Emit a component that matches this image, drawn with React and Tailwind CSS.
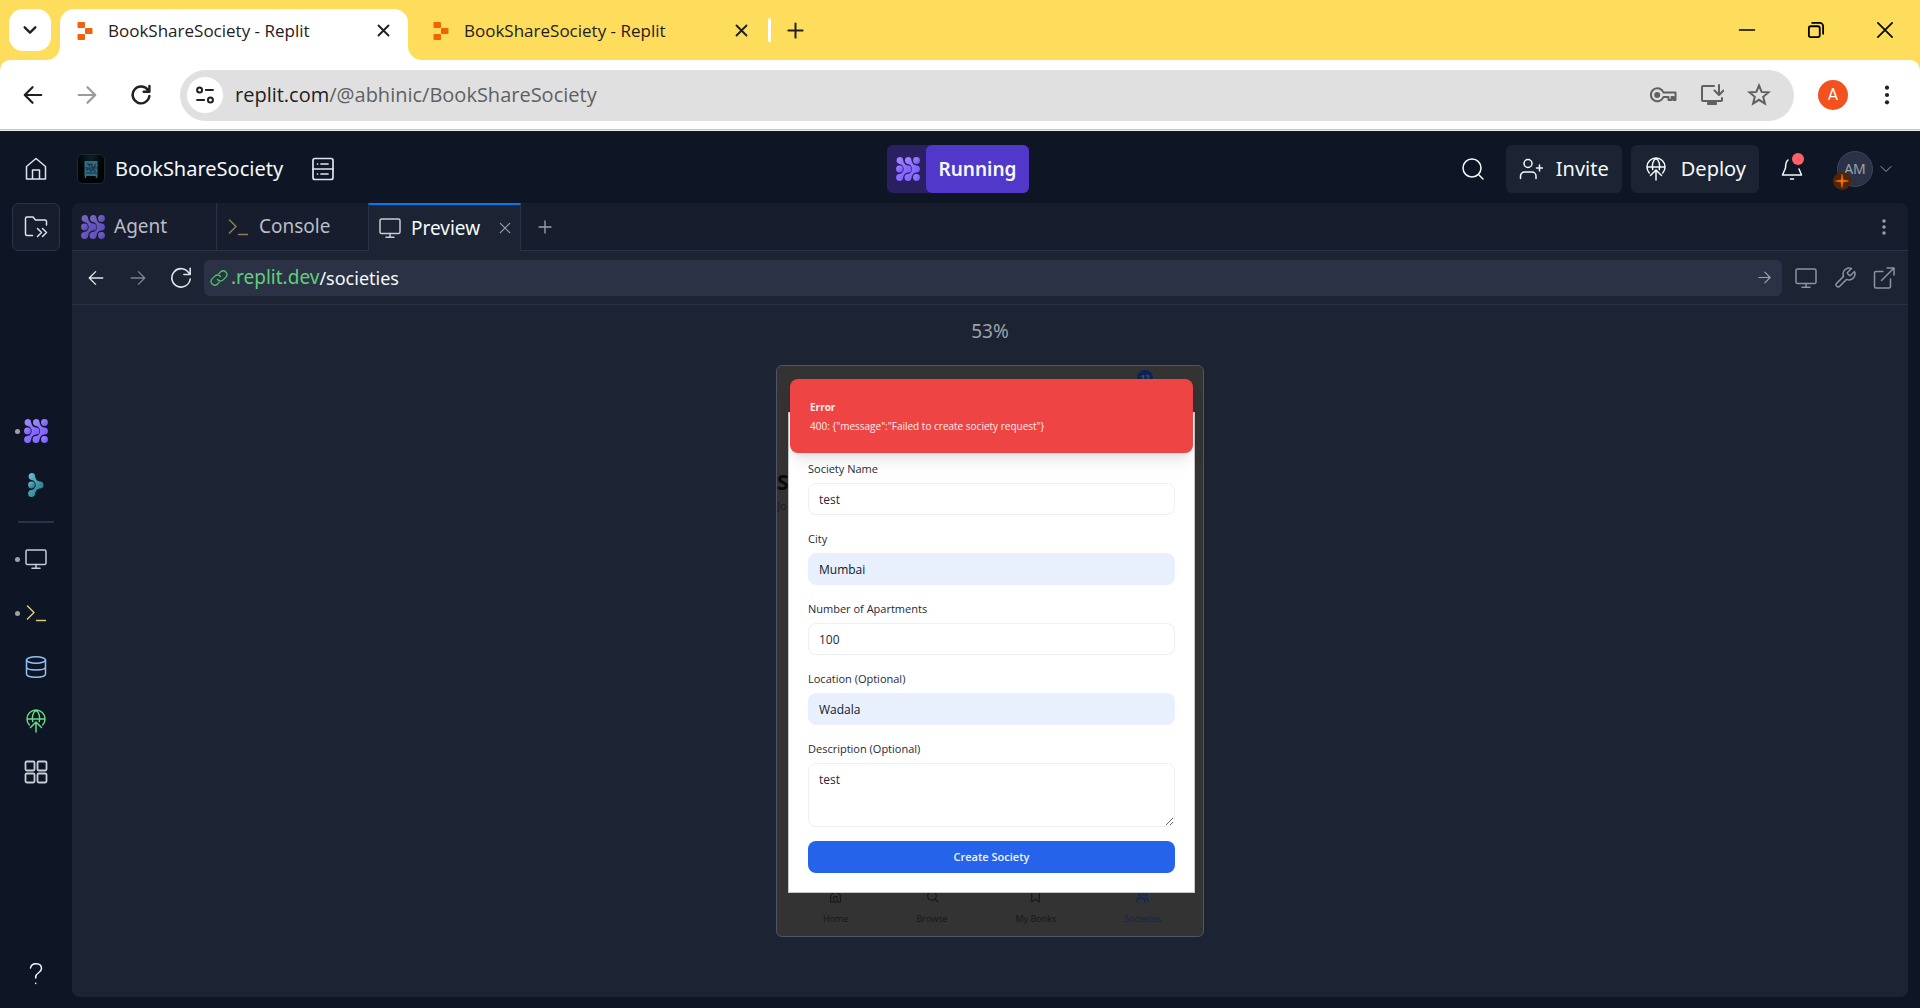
import React from "react";

const ui = "font-['Noto_Sans',sans-serif]";

function Svg({ className, children, box = "0 0 24 24", width = 1.5 }) {
  return (
    <svg viewBox={box} className={className} fill="none" stroke="currentColor" strokeWidth={width} strokeLinecap="round" strokeLinejoin="round" aria-hidden="true">
      {children}
    </svg>
  );
}

const Chevron = ({ x = 0 }) => (
  <path
    transform={`translate(${x} 0)`}
    d="M3.5 0.1A3.4 3.4 0 0 1 7.1 3.2C7.6 6.2 9.2 8.3 12 8.500A3.500 3.500 0 0 1 12 15.500C9.200 15.700 7.600 17.800 7.100 20.800A3.500 3.500 0 1 1 3.500 17C6 16.600 7.700 14.600 7.700 12S6 7.400 3.500 7A3.500 3.500 0 0 1 3.500 0.100Z"
  />
);

function AgentIcon({ className, id }) {
  return (
    <svg viewBox="0 0 24 24" className={className} aria-hidden="true">
      <defs>
        <linearGradient id={id} x1="0" y1="0" x2="1" y2="1">
          <stop offset="0" stopColor="#a18bff" />
          <stop offset="1" stopColor="#7352ff" />
        </linearGradient>
      </defs>
      <g fill={`url(#${id})`}>
        <Chevron />
        <Chevron x={8.4} />
        <circle cx="3.5" cy="12" r="3.4" />
        <circle cx="20.5" cy="3.5" r="3.4" />
        <circle cx="20.5" cy="20.5" r="3.4" />
      </g>
    </svg>
  );
}

function AssistantIcon({ className }) {
  return (
    <svg viewBox="0 0 16 24" className={className} aria-hidden="true">
      <defs>
        <linearGradient id="teal" x1="0" y1="0" x2="1" y2="1">
          <stop offset="0" stopColor="#6cc3d5" />
          <stop offset="1" stopColor="#1f6c7c" />
        </linearGradient>
      </defs>
      <g fill="url(#teal)">
        <Chevron />
        <circle cx="3.5" cy="12" r="3.4" />
      </g>
    </svg>
  );
}

function ReplitLogo({ className }) {
  return (
    <svg viewBox="0 0 16 18" className={className} fill="#f26207" aria-hidden="true">
      <rect x="0.5" y="0" width="7.5" height="6" rx="1" />
      <rect x="8" y="6" width="7.5" height="6" rx="1" />
      <rect x="0.5" y="12" width="7.5" height="6" rx="1" />
    </svg>
  );
}

const Monitor = ({ className }) => (
  <Svg className={className}><rect x="2" y="3" width="20" height="14.5" rx="1.6" /><path d="M12 17.5V21M8 21.3h8" /></Svg>
);
const Prompt = ({ className }) => (
  <Svg className={className}><path d="M3.5 5l6.500 6.500L3.500 18M12.500 19.500h9" /></Svg>
);
const DeployIcon = ({ className }) => (
  <Svg className={className}>
    <path d="M5.300 16A9 9 0 1 1 18.700 16M3.300 10h17.400M8.700 12.500C7.600 8 9 3 12 1.300c3 1.700 4.400 6.700 3.300 11.200M12 23V13.500M6.500 18.500 12 13l5.500 5.500" />
  </Svg>
);
const Arrow = ({ className, width = 1.5, flip }) => (
  <Svg className={className} width={width}>
    {flip ? <path d="M21 12H3.500M11.500 3.500 3 12l8.500 8.500" /> : <path d="M3 12h17.500M12.500 3.500 21 12l-8.500 8.500" />}
  </Svg>
);
const Reload = ({ className, width = 1.5 }) => (
  <Svg className={className} width={width}><path d="M20 7.200A9.200 9.200 0 1 0 21.200 13M21.200 2.200v6.300h-6.300" /></Svg>
);
const Close = ({ className, width = 2 }) => (
  <Svg className={className} width={width}><path d="M4 4l16 16M20 4 4 20" /></Svg>
);
const Plus = ({ className, width = 2 }) => (
  <Svg className={className} width={width}><path d="M12 3v18M3 12h18" /></Svg>
);
const Dots = ({ className }) => (
  <svg viewBox="0 0 24 24" className={className} fill="currentColor" aria-hidden="true">
    <circle cx="12" cy="4" r="2.300" /><circle cx="12" cy="12" r="2.300" /><circle cx="12" cy="20" r="2.300" />
  </svg>
);

function BrowserTab({ active }) {
  return (
    <div className={active ? "relative flex h-[51px] w-[348px] items-center rounded-t-[14px] bg-white px-[17px] pb-2" : "flex h-[51px] w-[360px] items-center pr-[19px] pb-2 pl-[25px]"}>
      {active && (
        <>
          <svg viewBox="0 0 14 14" className="absolute bottom-0 -left-[14px] size-[14px]" aria-hidden="true"><path d="M14 0v14H0A14 14 0 0 0 14 0Z" fill="#fff" /></svg>
          <svg viewBox="0 0 14 14" className="absolute -right-[14px] bottom-0 size-[14px]" aria-hidden="true"><path d="M0 0v14h14A14 14 0 0 1 0 0Z" fill="#fff" /></svg>
        </>
      )}
      <ReplitLogo className="h-[18px] w-4 shrink-0" />
      <span className="ml-[15px] flex-1 text-[17px] whitespace-nowrap text-[#1f2023]">BookShareSociety - Replit</span>
      <button aria-label="Close tab" className="text-[#1f2023]"><Close className="size-[15px]" width={3} /></button>
    </div>
  );
}

function BrowserChrome() {
  return (
    <header className="bg-[#ffdd5c] font-['Open_Sans',sans-serif]">
      <div className="flex h-[60px] items-start pt-[9px] pl-[9px]">
        <button aria-label="Search tabs" className="mr-[9px] flex size-[42px] items-center justify-center rounded-[14px] bg-white text-[#1f2023]">
          <Svg className="size-4" width={3.500}><path d="M4 8l8 8 8-8" /></Svg>
        </button>
        <BrowserTab active />
        <BrowserTab />
        <div className="mt-[9px] h-6 w-[3px] rounded bg-white" />
        <button aria-label="New tab" className="mt-[12px] ml-[15px] text-[#1f2023]"><Plus className="size-[19px]" width={2.500} /></button>
        <div className="mt-[12px] mr-[26px] ml-auto flex items-center gap-[51px] text-black">
          <button aria-label="Minimize"><Svg className="size-[18px]" width={2}><path d="M2 12h20" /></Svg></button>
          <button aria-label="Restore"><Svg className="size-[18px]" width={2.400}><rect x="2.500" y="7" width="14.500" height="14.500" rx="2.500" /><path d="M7 2.500h10a4.500 4.500 0 0 1 4.500 4.500v10" /></Svg></button>
          <button aria-label="Close window"><Svg className="size-[18px]" width={2.200}><path d="M2.500 2.500l19 19M21.500 2.500l-19 19" /></Svg></button>
        </div>
      </div>
      <div className="flex h-[71px] items-center rounded-t-[10px] border-b border-[#eee] bg-white pr-[22px] pl-[22px] shadow-[inset_0_-1px_0_#c4c4c4]">
        <button aria-label="Back" className="text-[#1f2023]"><Arrow flip className="size-[22px]" width={2.400} /></button>
        <button aria-label="Forward" className="ml-8 text-[#9a9a9a]"><Arrow className="size-[22px]" width={2.400} /></button>
        <button aria-label="Reload" className="ml-8 text-[#1f2023]"><Reload className="size-[22px]" width={2.600} /></button>
        <div className="ml-7 flex h-[51px] flex-1 items-center rounded-full bg-[#e0e0e0] px-[7px]">
          <button aria-label="Site information" className="flex size-9 items-center justify-center rounded-full bg-white text-[#1f2023]">
            <Svg className="size-5" width={2.400}><circle cx="5.500" cy="6" r="3" /><path d="M13 6h8.500M2.500 18H11" /><circle cx="18.500" cy="18" r="3" /></Svg>
          </button>
          <p className="ml-3 flex-1 text-xl text-[#5f6063]"><span className="text-[#1f2023]">replit.com</span>/@abhinic/BookShareSociety</p>
          <div className="mr-4 flex items-center gap-[23px] text-[#5f6063]">
            <button aria-label="Passwords"><Svg className="h-[18px] w-[28px]" box="0 0 28 18" width={2}><path d="M14.500 6.500h12v7.500h-2v-3h-2v3h-3v-3h-5A6.500 6.500 0 1 1 14.500 6.500Z" /><circle cx="8.200" cy="9" r="3" fill="currentColor" stroke="none" /></Svg></button>
            <button aria-label="Install app"><Svg className="size-6" width={2}><path d="M14 3H3a1 1 0 0 0-1 1v13a1 1 0 0 0 1 1h18a1 1 0 0 0 1-1v-2M19 2v9M14.500 7.500 19 12l4.500-4.500M8 20h8v1H8Z" /></Svg></button>
            <button aria-label="Bookmark"><Svg className="size-6" width={2}><path strokeLinejoin="miter" d="M12 2.500l2.600 6.400 6.900.5-5.300 4.400 1.700 6.700L12 16.800l-5.900 3.700 1.700-6.700-5.300-4.400 6.900-.5Z" /></Svg></button>
          </div>
        </div>
        <div className="ml-6 flex size-[30px] items-center justify-center rounded-full bg-[#f4511e] font-['Roboto',sans-serif] text-base text-white">A</div>
        <button aria-label="Browser menu" className="ml-7 text-[#1f2023]"><Dots className="size-[22px]" /></button>
      </div>
    </header>
  );
}

function AppHeader() {
  return (
    <div className="grid h-[72px] grid-cols-[1fr_auto_1fr] items-center pt-1 pr-7 pl-6 text-[#f5f9fc]">
      <div className="flex items-center">
        <button aria-label="Home" className="text-[#dfe3ea]"><Svg className="size-6"><path d="M2.500 9.500 12 1.500l9.500 8V22h-19ZM8.500 22v-9h7v9" /></Svg></button>
        <svg viewBox="0 0 28 30" className="ml-[29px] h-[30px] w-7" aria-hidden="true">
          <defs>
            <radialGradient id="cover" cy="0.1"><stop offset="0" stopColor="#08222a" /><stop offset="1" stopColor="#010304" /></radialGradient>
          </defs>
          <rect x=".5" y=".5" width="27" height="29" rx="5" fill="url(#cover)" stroke="#22282e" />
          <rect x="7.500" y="7" width="13" height="15" fill="#336b84" />
          <path d="M10 10h2v2h1v-2h2v3h3v-3M10 17v-2h3v2h2v-2h2v2h2M8 14h13M9 19h11" stroke="#0f2f3d" fill="none" />
          <path d="M8.500 22v2m11-2v2" stroke="#336b84" strokeWidth="1.500" />
        </svg>
        <span className="ml-[10px] text-[20px]">BookShareSociety</span>
        <button aria-label="Workspace settings" className="ml-7 text-[#dfe3ea]"><Svg className="size-6" width={1.700}><rect x="2" y="1.500" width="20" height="21" rx="2" /><path d="M2 12h20M6.500 7h.1M10 7h7M6.500 17h.1M10 17h7" /></Svg></button>
      </div>
      <div className="flex h-12 rounded-md bg-[#291f61]">
        <button aria-label="Agent" className="w-[39px] pl-[9px]"><AgentIcon id="runIcon" className="size-6" /></button>
        <button className="rounded-md bg-[#5237cb] px-[13px] text-[19px] font-semibold">Running</button>
      </div>
      <div className="flex items-center justify-end">
        <button aria-label="Search"><Svg className="size-6"><circle cx="11" cy="11" r="9" /><path d="M17.500 17.500 22 22" /></Svg></button>
        <button className="ml-[21px] flex h-12 items-center rounded-md bg-[#1c2333] px-[13px] text-xl"><Svg className="mr-[13px] size-6"><circle cx="9" cy="6.500" r="4" /><path d="M1.500 21.500V19a4 4 0 0 1 4-4H13a4 4 0 0 1 4 4v2.500M20.500 8v6M17.500 11h6" /></Svg>Invite</button>
        <button className="ml-[9px] flex h-12 items-center rounded-md bg-[#1c2333] px-[13px] text-xl"><DeployIcon className="mr-[13px] size-6" />Deploy</button>
        <button aria-label="Notifications" className="relative ml-[21px]"><Svg className="size-6"><path d="M8 3C5.500 5 5.500 8 5.500 11L2.500 18h19l-2.500-6M10.500 22h3" /></Svg><span className="absolute -top-1 right-0 size-3 rounded-full bg-[#ff6166]" /></button>
        <button aria-label="Account" className="relative ml-[33px] flex items-center">
          <span className="flex size-9 items-center justify-center rounded-full border border-[#3c445c] bg-[#2b3245] text-sm text-[#9da2a6]">AM</span>
          <span className="absolute top-[21px] -left-1 flex size-[18px] items-center justify-center rounded-full bg-[#4f2704] text-[#ff6a0a]"><Svg className="size-[14px]" width={1}><path fill="currentColor" d="M12 1l1.800 9.200L23 12l-9.200 1.800L12 23l-1.800-9.200L1 12l9.200-1.800Z" /></Svg></span>
          <Svg className="ml-[7px] size-3 text-[#9da2a6]" width={2}><path d="M2 7l10 10L22 7" /></Svg>
        </button>
      </div>
    </div>
  );
}

function RailItem({ label, dot, children }) {
  return (
    <button aria-label={label} className="relative flex h-[54px] w-full items-center justify-center">
      {dot && <span className="absolute left-[15px] size-[5px] rounded-full bg-[#9da2a6]" />}
      {children}
    </button>
  );
}

function Rail() {
  return (
    <nav className="flex w-[72px] flex-col items-center">
      <button aria-label="Show files" className="flex size-12 items-center justify-center rounded-md border border-[#2b3245] bg-[#171d2d] text-[#dfe3ea]">
        <Svg className="size-6"><path d="M8.500 20.500H3a1.500 1.500 0 0 1-1.500-1.500V3.500A1.500 1.500 0 0 1 3 2h6l2.500 3H21a1.500 1.500 0 0 1 1.500 1.500V10M13.500 13.500l4 4-4 4M18.500 13.500l4 4-4 4" /></Svg>
      </button>
      <div className="mt-[153px] flex w-full flex-col items-center">
        <RailItem label="Agent" dot><AgentIcon id="railIcon" className="size-6" /></RailItem>
        <RailItem label="Assistant"><AssistantIcon className="h-6 w-4" /></RailItem>
        <div className="my-[9px] h-[2px] w-9 bg-[#2b3245]" />
        <RailItem label="Preview" dot><Monitor className="size-6 text-[#c8ccd4]" /></RailItem>
        <RailItem label="Console" dot><Prompt className="size-6 text-[#e0c872]" /></RailItem>
        <RailItem label="Database"><Svg className="size-6 text-[#93c1f5]"><ellipse cx="12" cy="5" rx="9.500" ry="3.300" /><path d="M2.500 5v14c0 4.200 19 4.200 19 0V5M2.500 12c0 4 19 4 19 0" /></Svg></RailItem>
        <RailItem label="Deployments"><DeployIcon className="size-6 text-[#6bd982]" /></RailItem>
        <button aria-label="All tools" className="flex h-12 w-full items-center justify-center"><Svg className="size-6 text-[#c8ccd4]" width={1.800}><rect x="1.500" y="1.500" width="9" height="9" rx="1.200" /><rect x="13.500" y="1.500" width="9" height="9" rx="1.200" /><rect x="1.500" y="13.500" width="9" height="9" rx="1.200" /><rect x="13.500" y="13.500" width="9" height="9" rx="1.200" /></Svg></button>
      </div>
      <button aria-label="Help" className="mt-auto mb-[22px] text-[#f5f9fc]"><Svg className="size-6"><path d="M6.500 6C7.500 0 17.500.5 17.500 6.500c0 4.500-5.800 4-5.800 8.500v1M11.700 21.200v.3" /></Svg></button>
    </nav>
  );
}

function PaneTabs() {
  return (
    <div className="flex h-12 items-stretch text-[19px] text-[#b9bec7]">
      <button className="flex w-[145px] items-center border-r border-b border-[#2b3245] pl-[9px]"><AgentIcon id="tabIcon" className="mr-[9px] size-6 opacity-70" />Agent</button>
      <button className="flex w-[151px] items-center border-b border-[#2b3245] pl-[9px]"><Prompt className="mr-[9px] size-6 text-[#8a7f52]" />Console</button>
      <div className="flex w-[153px] items-center border-x border-t-2 border-x-[#2b3245] border-t-[#0079f2] bg-[#1c2333] pl-[9px] text-[#f5f9fc]">
        <button className="flex items-center"><Monitor className="mr-[9px] size-6 text-[#c8ccd4]" />Preview</button>
        <button aria-label="Close Preview" className="mr-2 ml-auto text-[#9da2a6]"><Close className="size-[14px]" /></button>
      </div>
      <div className="flex flex-1 items-center border-b border-[#2b3245] pr-3 pl-4 text-[#9da2a6]">
        <button aria-label="New pane"><Plus className="size-4" /></button>
        <button aria-label="Pane menu" className="ml-auto"><Dots className="size-6 p-[3px]" /></button>
      </div>
    </div>
  );
}

function PreviewBar() {
  return (
    <div className="flex h-[54px] items-center border-b border-[#2b3245] pr-3 pl-[15px]">
      <button aria-label="Back" className="text-[#dfe3ea]"><Arrow flip className="size-[18px]" width={1.800} /></button>
      <button aria-label="Forward" className="ml-6 text-[#7d838d]"><Arrow className="size-[18px]" width={1.800} /></button>
      <button aria-label="Reload" className="ml-[22px] text-[#dfe3ea]"><Reload className="size-6" width={1.600} /></button>
      <div className="ml-[11px] flex h-9 flex-1 items-center rounded-md bg-[#2b3245] px-[6px]">
        <Svg className="size-[18px] text-[#4fbf67]" width={1.800}><path d="M10 14a5 5 0 0 0 7.500.5l4-4a5 5 0 0 0-7-7L12 6M14 10a5 5 0 0 0-7.500-.5l-4 4a5 5 0 0 0 7 7L12 18" /></Svg>
        <span className="ml-[3px] text-[19px] text-[#5fd078]">.replit.dev</span>
        <input aria-label="Path" defaultValue="/societies" className="min-w-0 flex-1 bg-transparent text-lg text-[#f5f9fc] outline-none" />
        <button aria-label="Go" className="mr-1 text-[#9da2a6]"><Arrow className="size-[15px]" width={1.800} /></button>
      </div>
      <div className="ml-3 flex items-center gap-[15px] text-[#8d939d]">
        <button aria-label="Device size"><Monitor className="size-6" /></button>
        <button aria-label="Developer tools"><Svg className="size-6"><path d="M14.700 6.300a1 1 0 0 0 0 1.400l1.600 1.600a1 1 0 0 0 1.400 0l3.800-3.800a6 6 0 0 1-7.900 7.900l-6.900 6.900a2.100 2.100 0 0 1-3-3l6.900-6.900a6 6 0 0 1 7.900-7.900Z" /></Svg></button>
        <button aria-label="Open in new tab"><Svg className="size-6"><path d="M18.500 13v7.500a1.500 1.500 0 0 1-1.500 1.500H4a1.500 1.500 0 0 1-1.500-1.500V7A1.500 1.500 0 0 1 4 5.500h7M15 2h7v7M9.500 14.500 22 2" /></Svg></button>
      </div>
    </div>
  );
}

const fieldBox = "block w-full rounded-lg border px-[10px] text-[12px] leading-5";

function Field({ id, label, value, filled, area }) {
  return (
    <div className="flex flex-col gap-1">
      <label htmlFor={id} className="text-[11px] leading-5 font-medium text-[#1e293b]">{label}</label>
      {area ? (
        <textarea id={id} defaultValue={value} className={`${fieldBox} h-16 resize-y border-[#eceff5] bg-white py-[6px] text-[#1e293b]`} />
      ) : (
        <input id={id} defaultValue={value} className={filled ? `${fieldBox} h-8 border-[#e8f0fe] bg-[#e8f0fe] text-[#111827]` : `${fieldBox} h-8 border-[#eceff5] bg-white text-[#1e293b]`} />
      )}
    </div>
  );
}

function NavLink({ label, active, children }) {
  return (
    <a href={`#${label}`} className={active ? "flex flex-col items-center gap-2 text-[#0b2460]" : "flex flex-col items-center gap-2 text-[#13171d]"}>
      <Svg className="size-[13px]" width={2}>{children}</Svg>
      <span className="text-[9px] leading-4 font-medium">{label}</span>
    </a>
  );
}

function Phone() {
  return (
    <div className="relative h-[572px] w-[428px] overflow-hidden rounded-md border border-[#4e5569] bg-[#333]">
      <div className="flex h-full flex-col">
        <div className="mt-1 mr-[50px] flex size-4 items-center justify-center self-end rounded-full bg-[#0c2454] text-[8px] font-bold text-[#4a4d55]">12</div>
        <div className="mt-[82px] w-[11px] overflow-hidden text-[21px] leading-7 font-bold text-[#08090c]">S</div>
        <div className="w-[11px] overflow-hidden text-[11px] leading-5 text-[#181b20]">Jo</div>
        <nav className="mt-auto mb-[9px] flex justify-between pr-[42px] pl-[46px]">
          <NavLink label="Home"><path d="M3 10 12 2l9 8v12H3ZM9 22V12h6v10" /></NavLink>
          <NavLink label="Browse"><circle cx="11" cy="11" r="8" /><path d="M17 17l5 5" /></NavLink>
          <NavLink label="My Books"><path d="M5 2h14v20l-7-5-7 5Z" /></NavLink>
          <NavLink label="Societies" active><circle cx="9" cy="7" r="4" /><path d="M2 22v-3a4 4 0 0 1 4-4h6a4 4 0 0 1 4 4v3M16 3a4 4 0 0 1 0 8M22 22v-3a4 4 0 0 0-3-4" /></NavLink>
        </nav>
      </div>
      <form className="absolute top-[46px] left-[11px] flex w-[407px] flex-col gap-[14px] border border-[#c5c7cb] bg-white px-[19px] pt-[46px] pb-[19px]">
        <Field id="name" label="Society Name" value="test" />
        <Field id="city" label="City" value="Mumbai" filled />
        <Field id="count" label="Number of Apartments" value="100" />
        <Field id="location" label="Location (Optional)" value="Wadala" filled />
        <Field id="description" label="Description (Optional)" value="test" area />
        <button type="button" className="h-8 rounded-lg bg-[#2563eb] text-[11px] font-semibold text-[#f1f5fd]">Create Society</button>
      </form>
      <div role="alert" className="absolute top-[13px] left-[13px] h-[74px] w-[403px] rounded-lg bg-[#ef4444] px-5 pt-[19px] text-[#fdeeee] shadow-lg">
        <p className="text-[10px] leading-[18px] font-bold">Error</p>
        <p className="text-[10px] leading-5 font-medium">400: {'{"message":"Failed to create society request"}'}</p>
      </div>
    </div>
  );
}

export default function App() {
  return (
    <div className="flex min-h-screen flex-col bg-[#0e1525]">
      <BrowserChrome />
      <div className={`${ui} flex flex-1 flex-col`}>
        <AppHeader />
        <div className="flex flex-1">
          <Rail />
          <main className="mr-3 mb-[11px] flex flex-1 flex-col overflow-hidden rounded-lg bg-[#171d2d]">
            <PaneTabs />
            <div className="flex flex-1 flex-col bg-[#1c2333]">
              <PreviewBar />
              <div className="flex flex-1 flex-col items-center pt-[14px]">
                <p className="text-[19px] leading-6 text-[#9da2a6]">53%</p>
                <div className="mt-[22px] font-['Open_Sans',sans-serif]"><Phone /></div>
              </div>
            </div>
          </main>
        </div>
      </div>
    </div>
  );
}
